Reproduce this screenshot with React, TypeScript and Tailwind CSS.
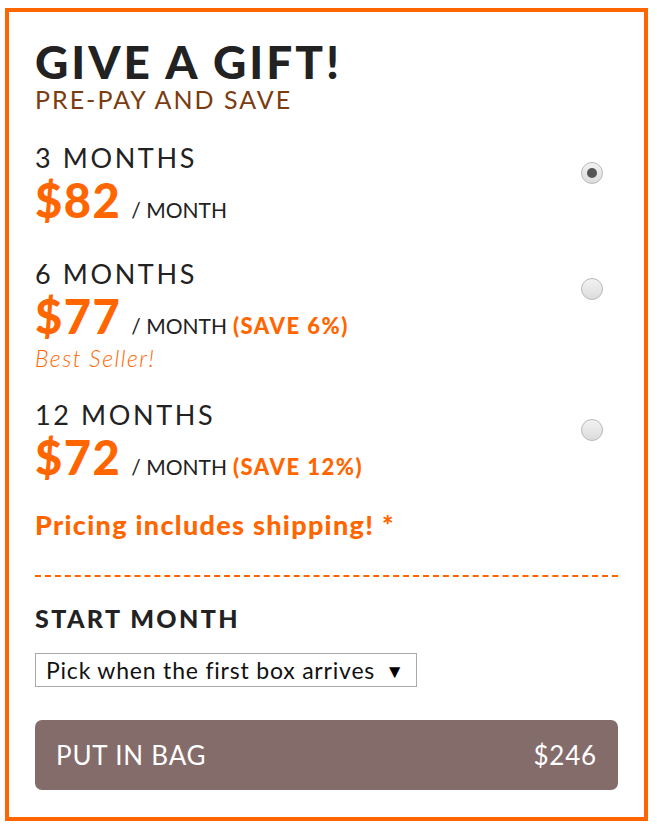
import React from "react";

function Radio({ checked }: { checked?: boolean }) {
  return (
    <div className="w-[22px] h-[22px] rounded-full border border-[#b9b9b9] bg-[linear-gradient(#f2f2f2,#dcdcdc)] flex items-center justify-center">
      {checked && <div className="w-[10px] h-[10px] rounded-full bg-[#555555]" />}
    </div>
  );
}

function Option({
  months,
  price,
  save,
  note,
  checked,
}: {
  months: string;
  price: string;
  save?: string;
  note?: string;
  checked?: boolean;
}) {
  return (
    <div className="flex justify-between items-start">
      <div className="flex flex-col">
        <div className="text-[27px] leading-[32px] text-[#222222] tracking-[2.6px]">{months}</div>
        <div className="flex items-baseline">
          <span className="text-[47px] leading-[52px] font-black text-[#ff6600] tracking-[1.5px]">{price}</span>
          <span className="ml-[10px] text-[21px] leading-[24px] text-[#222222]">/ MONTH</span>
          {save && <span className="ml-[6px] text-[22px] leading-[24px] font-black text-[#ff6600] tracking-[1.5px]">{save}</span>}
        </div>
        {note && <div className="mt-[2px] text-[23px] leading-[28px] italic font-light text-[#ff6600] tracking-[1.5px]">{note}</div>}
      </div>
      <div className="mt-[20px] mr-[15px]">
        <Radio checked={checked} />
      </div>
    </div>
  );
}

export default function App() {
  return (
    <div className="pl-[5px] pt-[8px] [font-family:Lato,sans-serif]">
      <div className="w-[643px] h-[813px] border-4 border-[#ff6600] bg-white px-[26px] pt-[26px] flex flex-col">
        <div className="text-[46px] leading-[48px] font-black text-[#222222] tracking-[3px]">GIVE A GIFT!</div>
        <div className="text-[25px] leading-[27px] text-[#7a3c10] tracking-[2px]">PRE-PAY AND SAVE</div>
        <div className="mt-[29px] flex flex-col">
          <Option months="3 MONTHS" price="$82" checked />
          <div className="mt-[32px]">
            <Option months="6 MONTHS" price="$77" save="(SAVE 6%)" note="Best Seller!" />
          </div>
          <div className="mt-[27px]">
            <Option months="12 MONTHS" price="$72" save="(SAVE 12%)" />
          </div>
        </div>
        <div className="mt-[26px] text-[27px] leading-[32px] font-black text-[#ff6600] tracking-[1.3px]">Pricing includes shipping! *</div>
        <div className="mt-[34px] border-t-2 border-dashed border-[#ff6600]" />
        <div className="mt-[27px] text-[25px] leading-[28px] font-black text-[#222222] tracking-[2.4px]">START MONTH</div>
        <div className="mt-[21px] w-[382px] h-[34px] border border-[#aaaaaa] flex items-center justify-between pl-[10px] pr-[12px]">
          <span className="text-[23px] text-[#111111] tracking-[0.8px]">Pick when the first box arrives</span>
          <span className="text-[19px] leading-none text-black">▼</span>
        </div>
        <div className="mt-[33px] h-[70px] rounded-[7px] bg-[#846c6b] flex items-center justify-between px-[21px] text-white text-[26px] tracking-[0.8px]">
          <span>PUT IN BAG</span>
          <span>$246</span>
        </div>
      </div>
    </div>
  );
}
